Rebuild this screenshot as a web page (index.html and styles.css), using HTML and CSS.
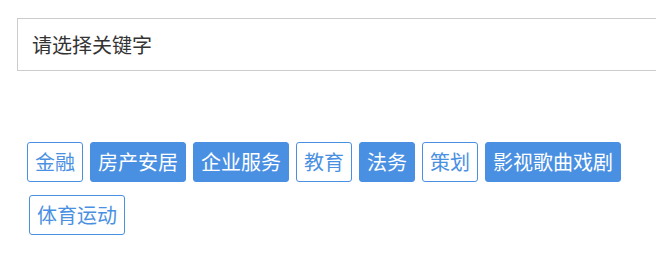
FILE: index.html
```html
<!DOCTYPE html>
<html lang="zh-CN">
<head>
<meta charset="utf-8">
<title>关键字</title>
<link rel="stylesheet" href="styles.css">
</head>
<body>
<div class="page">
  <div class="select-box"><span class="select-text">请选择关键字</span></div>
  <div class="tags">
    <span class="tag">金融</span>
    <span class="tag active">房产安居</span>
    <span class="tag active">企业服务</span>
    <span class="tag">教育</span>
    <span class="tag active">法务</span>
    <span class="tag">策划</span>
    <span class="tag active">影视歌曲戏剧</span>
    <span class="tag second-row">体育运动</span>
  </div>
</div>
</body>
</html>
```

FILE: styles.css
```css
html, body {
  margin: 0;
  padding: 0;
  background: #ffffff;
}

body {
  font-family: "Noto Sans CJK SC", "Noto Sans", sans-serif;
}

.page {
  padding: 18px 0 0 17px;
}

.select-box {
  height: 53px;
  box-sizing: border-box;
  border: 1px solid #cccccc;
  border-right: none;
  display: flex;
  align-items: center;
  padding-left: 14px;
  font-size: 20px;
  color: #333333;
}

.tags {
  margin-top: 71px;
  margin-left: 10px;
  width: 620px;
  display: flex;
  flex-wrap: wrap;
  gap: 13px 7px;
}

.tag {
  height: 40px;
  box-sizing: border-box;
  padding: 0 7px;
  border: 1px solid #4a90e2;
  border-radius: 3px;
  line-height: 38px;
  font-size: 20px;
  color: #4a90e2;
  background: #ffffff;
}

.tag.active {
  background: #4a90e2;
  color: #ffffff;
}

.tag.second-row {
  margin-left: 2px;
}
```
